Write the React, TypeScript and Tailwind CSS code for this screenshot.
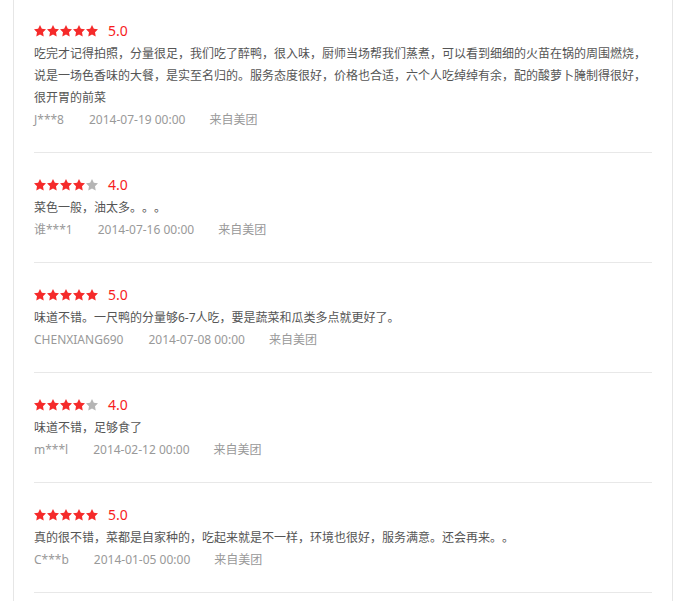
const reviews = [
  {
    score: 5,
    text: "吃完才记得拍照，分量很足，我们吃了醉鸭，很入味，厨师当场帮我们蒸煮，可以看到细细的火苗在锅的周围燃烧，说是一场色香味的大餐，是实至名归的。服务态度很好，价格也合适，六个人吃绰绰有余，配的酸萝卜腌制得很好，很开胃的前菜",
    user: "J***8",
    time: "2014-07-19 00:00",
  },
  { score: 4, text: "菜色一般，油太多。。。", user: "谁***1", time: "2014-07-16 00:00" },
  {
    score: 5,
    text: "味道不错。一尺鸭的分量够6-7人吃，要是蔬菜和瓜类多点就更好了。",
    user: "CHENXIANG690",
    time: "2014-07-08 00:00",
  },
  { score: 4, text: "味道不错，足够食了", user: "m***l", time: "2014-02-12 00:00" },
  {
    score: 5,
    text: "真的很不错，菜都是自家种的，吃起来就是不一样，环境也很好，服务满意。还会再来。。",
    user: "C***b",
    time: "2014-01-05 00:00",
  },
];

function Star({ on }: { on: boolean }) {
  return (
    <svg width="12" height="12" viewBox="2 2 20 20" className={on ? "fill-[#f52a2a]" : "fill-[#b5b5b5]"}>
      <polygon points="12,2 15.09,8.26 22,9.27 17,14.14 18.18,21.02 12,17.77 5.82,21.02 7,14.14 2,9.27 8.91,8.26" />
    </svg>
  );
}

export default function App() {
  return (
    <div className="bg-white min-h-[601px] font-['Noto_Sans','Noto_Sans_CJK_SC',sans-serif] [text-spacing-trim:space-all]">
      <div className="ml-[13px] w-[660px] min-h-[601px] border-x border-[#e6e6e6] px-5 pt-[19px]">
        {reviews.map((r, i) => (
          <div key={i} className={`border-b border-[#e8e8e8] pb-[21px] ${i > 0 ? "pt-5" : ""}`}>
            {/* stars + score */}
            <div className="flex items-center h-6">
              <div className="flex gap-[1px]">
                {[1, 2, 3, 4, 5].map(n => <Star key={n} on={n <= r.score} />)}
              </div>
              <span className="ml-[10px] text-[14px] text-[#f71d1d] leading-6">{r.score.toFixed(1)}</span>
            </div>
            <p className="text-[12px] leading-[22px] text-[#555]">{r.text}</p>
            <div className="text-[12px] leading-[22px] text-[#999]">
              <span className="mr-[25px]">{r.user}</span>
              <span className="mr-6">{r.time}</span>
              <span>来自美团</span>
            </div>
          </div>
        ))}
      </div>
    </div>
  );
}
